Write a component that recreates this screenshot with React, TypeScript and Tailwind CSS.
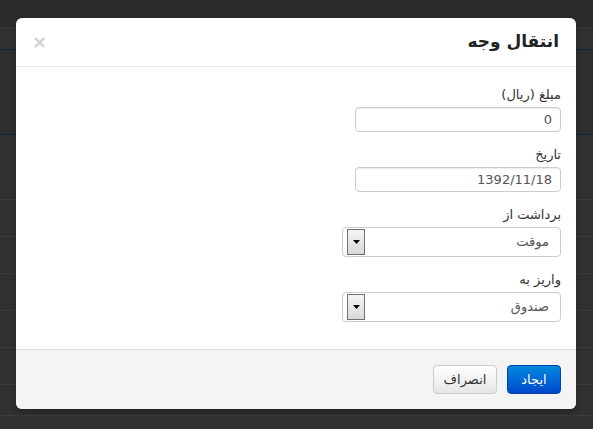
import React from "react";

const font = { fontFamily: '"DejaVu Sans", Tahoma, sans-serif' };

function SelectBox({ value }: { value: string }) {
  return (
    <div className="flex h-[30px] w-[219px] items-center justify-between rounded-[4px] border border-[#cccccc] bg-white pr-[11px] pl-[4px]">
      <span className="text-[13px] text-[#555555]">{value}</span>
      <div className="flex h-[26px] w-[18px] items-center justify-center border border-[#707070] bg-gradient-to-b from-[#f4f4f4] to-[#d9d9d9]">
        <svg width="7" height="4" viewBox="0 0 7 4">
          <path d="M0 0 H7 L3.5 4 Z" fill="#000" />
        </svg>
      </div>
    </div>
  );
}

function Field({ label, children }: { label: string; children: React.ReactNode }) {
  return (
    <div className="flex flex-col items-start">
      <div className="mb-[3px] h-[18px] text-[13px] leading-[18px] text-[#333333]">{label}</div>
      {children}
    </div>
  );
}

function TextBox({ value }: { value: string }) {
  return (
    <div className="flex h-[25px] w-[206px] items-center rounded-[4px] border border-[#cccccc] bg-white pr-[8px] text-[13px] text-[#555555] shadow-[inset_0_1px_1px_rgba(0,0,0,0.075)]">
      {value}
    </div>
  );
}

export default function App() {
  return (
    <div className="relative h-[429px] w-[593px] overflow-hidden bg-[#313131]" style={font}>
      <div className="flex flex-col">
        <div className="h-[28px] border-b border-[#3a3a3a] bg-[#2b2b2b]" />
        <div className="h-[22px] border-b border-[#0f2a3e]" />
        <div className="h-[85px] border-b border-[#0f2a3e] bg-[#2f2f2f]" />
        <div className="h-[65px] border-b border-[#3b3b3b]" />
        <div className="h-[37px] border-b border-[#3b3b3b]" />
        <div className="h-[37px] border-b border-[#3b3b3b]" />
        <div className="h-[37px] border-b border-[#3b3b3b]" />
        <div className="h-[37px] border-b border-[#3b3b3b]" />
        <div className="h-[37px] border-b border-[#3b3b3b]" />
        <div className="h-[31px] border-b border-[#3b3b3b]" />
      </div>

      <div
        dir="rtl"
        className="absolute left-[16px] top-[18px] flex h-[391px] w-[560px] flex-col overflow-hidden rounded-[6px] bg-white shadow-[0_3px_7px_rgba(0,0,0,0.3)]"
      >
        <div className="flex h-[49px] items-center justify-between border-b border-[#e5e5e5] pl-[16px] pr-[17px]">
          <div className="text-[17px] font-bold text-[#222222]">انتقال وجه</div>
          <div className="text-[18px] font-bold leading-none text-[#d0d0d0]">×</div>
        </div>

        <div className="flex flex-1 flex-col items-start gap-[14px] pr-[15px] pt-[19px]">
          <Field label="مبلغ (ریال)">
            <TextBox value="0" />
          </Field>
          <Field label="تاریخ">
            <TextBox value="1392/11/18" />
          </Field>
          <Field label="برداشت از">
            <SelectBox value="موقت" />
          </Field>
          <Field label="واریز به">
            <SelectBox value="صندوق" />
          </Field>
        </div>

        <div className="flex h-[60px] items-center gap-[10px] border-t border-[#dddddd] bg-[#f4f4f4] px-[15px]">
          <button className="h-[29px] w-[54px] rounded-[4px] border border-[#0044aa] bg-gradient-to-b from-[#0088dd] to-[#0047cc] text-[13px] text-white">
            ایجاد
          </button>
          <button className="h-[29px] w-[64px] rounded-[4px] border border-[#cccccc] bg-gradient-to-b from-[#ffffff] to-[#e6e6e6] text-[13px] text-[#333333]">
            انصراف
          </button>
        </div>
      </div>
    </div>
  );
}
